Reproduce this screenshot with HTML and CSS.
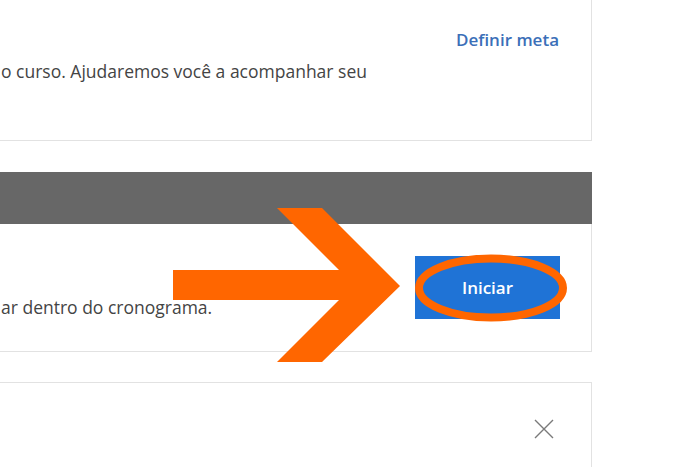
FILE: index.html
```html
<!DOCTYPE html>
<html lang="pt-BR">
<head>
<meta charset="utf-8">
<link rel="stylesheet" href="styles.css">
</head>
<body>
<div class="page">
  <section class="card goal">
    <div class="goal-head">
      <a class="link" href="#">Definir meta</a>
    </div>
    <p class="desc">o curso. Ajudaremos você a acompanhar seu</p>
  </section>

  <section class="card plan">
    <div class="plan-header"></div>
    <div class="plan-body">
      <p class="desc">ar dentro do cronograma.</p>
      <button class="btn">Iniciar</button>
    </div>
  </section>

  <section class="card notice">
    <div class="notice-row">
      <span class="close" aria-label="Fechar">
        <svg width="20" height="20" viewBox="0 0 20 20"><path d="M1 1 L19 19 M19 1 L1 19" stroke="#7a7a7a" stroke-width="1.4" fill="none"/></svg>
      </span>
    </div>
  </section>
</div>

<svg class="annot" width="700" height="467" viewBox="0 0 700 467">
  <polygon fill="#ff6600" points="173,270 339,270 277,208 322,208 400,286 322,362 277,362 339,300 173,300"/>
  <ellipse cx="491" cy="288" rx="72" ry="29.5" fill="none" stroke="#ff6600" stroke-width="8"/>
</svg>
</body>
</html>
```

FILE: styles.css
```css
html, body {
  margin: 0;
  padding: 0;
  background: #ffffff;
  overflow: hidden;
}
body {
  width: 700px;
  height: 467px;
  position: relative;
  font-family: "Open Sans", "Noto Sans", sans-serif;
  font-size: 17.5px;
  color: #444444;
}
.page {
  margin: -20px 0 0 -24px;
  width: 616px;
  display: flex;
  flex-direction: column;
  gap: 31px;
}
.card {
  background: #fff;
  border: 1px solid #e2e2e2;
}
.goal {
  padding: 47px 32px 57px 24px;
}
.goal-head {
  display: flex;
  justify-content: flex-end;
  align-items: center;
  height: 24px;
}
.link {
  color: #3b6fb8;
  font-weight: 600;
  font-size: 17px;
  text-decoration: none;
  line-height: 24px;
}
.desc {
  margin: 7px 0 0;
  line-height: 24px;
  white-space: nowrap;
}
.plan {
  border-top: none;
}
.plan-header {
  height: 52px;
  background: #676767;
  margin: 0 -1px;
}
.plan-body {
  display: flex;
  justify-content: space-between;
  align-items: flex-end;
  padding: 32px 31px 32px 24px;
}
.plan-body .desc {
  margin: 0;
}
.btn {
  width: 145px;
  height: 63px;
  border: none;
  background: #1f73d6;
  color: #fff;
  font-family: "Open Sans", "Noto Sans", sans-serif;
  font-size: 17px;
  font-weight: 600;
  padding: 0;
}
.notice {
  margin-top: -1px;
  height: 110px;
  padding: 36px 37px 0 24px;
}
.notice-row {
  display: flex;
  justify-content: flex-end;
}
.close {
  display: block;
  width: 20px;
  height: 20px;
}
.close svg {
  display: block;
}
.annot {
  position: absolute;
  left: 0;
  top: 0;
  pointer-events: none;
}
```
